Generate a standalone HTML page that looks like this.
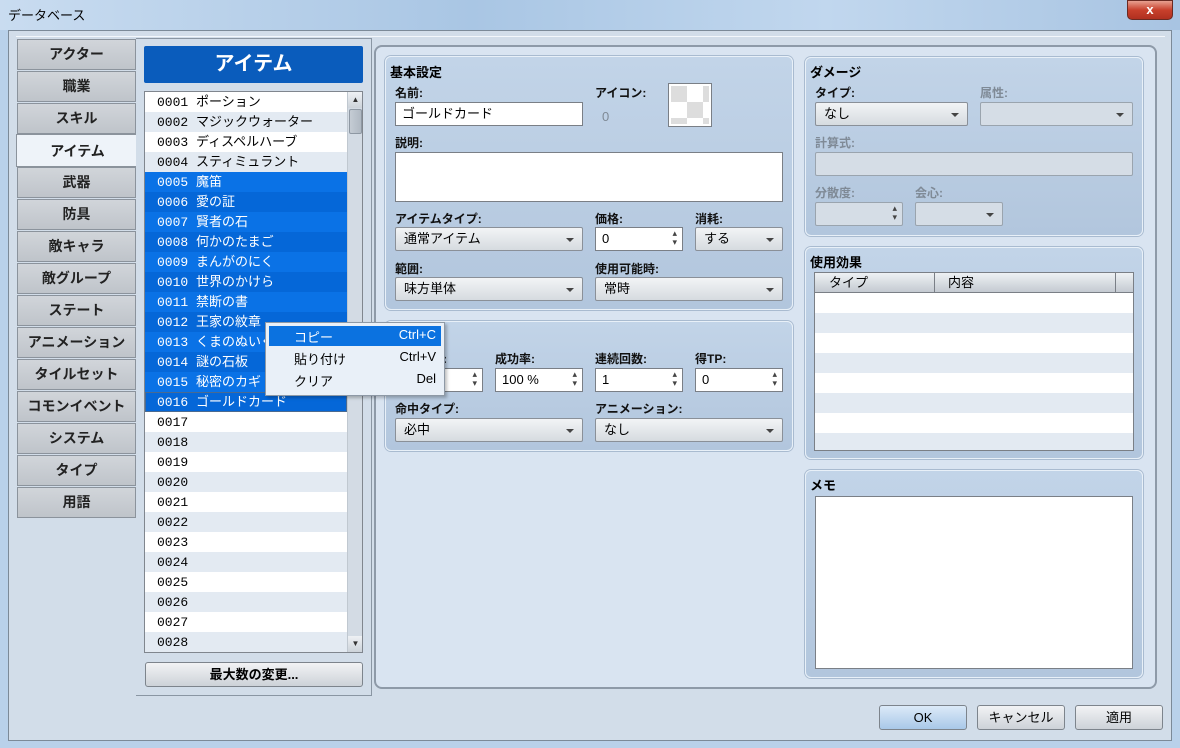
<!DOCTYPE html>
<html><head><meta charset="utf-8"><style>
*{box-sizing:border-box;margin:0;padding:0}
body{width:1180px;height:748px;overflow:hidden;position:relative;background:#b9d1ea;font-family:"Liberation Sans","Noto Sans CJK JP",sans-serif;font-size:13px;color:#000}
.a{position:absolute}
.title{left:0;top:0;width:1180px;height:30px;background:linear-gradient(90deg,#c9dcf0,#a9c6e4 40%,#c1d7ee 70%,#a8c4e2);}
.client{left:8px;top:30px;width:1164px;height:711px;background:#d2dde9;border:1px solid #7c8a98}
.tab{left:17px;width:119px;height:31px;background:linear-gradient(#d1d5da,#bfc4ca);border:1px solid #8b939c;font-weight:bold;font-size:14px;text-align:center;line-height:29px;color:#222}
.tab.sel{background:#eef3f9;left:16px;width:122px;border-right:none}
.lst{left:144px;top:91px;width:219px;height:562px;border:1px solid #80868e;background:#fff;overflow:hidden}
.r{position:absolute;left:0;width:202px;height:20px;line-height:21px;padding-left:12px;font-family:"Liberation Mono","Noto Sans CJK JP",monospace;font-size:13px;white-space:nowrap}
.r:nth-child(even){background:#e3eaf2}
.r.s{background:#0a72e6;color:#fff}
.r.s:nth-child(even){background:#0567d8}
.grp{background:linear-gradient(#c2d4e8,#b2c6dd);border:1px solid #e8f0f8;border-radius:6px;box-shadow:0 0 0 1px #a9bbd0}
.h{font-weight:bold;font-size:13px}
.lb{font-weight:bold;font-size:12px;color:#111}
.dis{color:#7f8a96}
.inp{background:#fff;border:1px solid #7a7f86;height:24px;line-height:22px;padding-left:6px;font-size:13px}
.sel2{background:linear-gradient(#f2f4f6,#d6dbe0);border:1px solid #8a9098;border-radius:2px;height:24px;line-height:22px;padding-left:8px;font-size:13px}
.sel2:after{content:"";position:absolute;right:8px;top:10px;border:4px solid transparent;border-top:4px solid #444;border-bottom:none}
.disb{background:#d5dde6;border:1px solid #9aa4ae;border-radius:2px;height:24px}
.spin:after{content:"▴\A▾";white-space:pre;position:absolute;right:5px;top:1px;font-size:9px;line-height:9px;color:#444}
.btn{background:linear-gradient(#f2f3f5,#cdd2d8);border:1px solid #7d848c;border-radius:3px;height:25px;line-height:23px;text-align:center;font-size:13px;font-weight:bold}
</style></head><body>
<div class="a title"></div>
<div class="a" style="left:8px;top:5px;font-size:13px">データベース</div>
<div class="a" style="left:1127px;top:0;width:46px;height:20px;background:linear-gradient(#e8a090,#c8402c 50%,#b03020);border:1px solid #6a2a22;border-radius:0 0 5px 5px;color:#fff;text-align:center;font-weight:bold;line-height:18px;font-size:13px">x</div>
<div class="a client"></div>
<div class="a" style="left:16px;top:36px;width:1149px;height:1px;background:#f3f7fb"></div>

<div class="a tab" style="top:39px">アクター</div>
<div class="a tab" style="top:71px">職業</div>
<div class="a tab" style="top:103px">スキル</div>
<div class="a tab sel" style="top:134px;height:33px;line-height:32px">アイテム</div>
<div class="a tab" style="top:167px">武器</div>
<div class="a tab" style="top:199px">防具</div>
<div class="a tab" style="top:231px">敵キャラ</div>
<div class="a tab" style="top:263px">敵グループ</div>
<div class="a tab" style="top:295px">ステート</div>
<div class="a tab" style="top:327px">アニメーション</div>
<div class="a tab" style="top:359px">タイルセット</div>
<div class="a tab" style="top:391px">コモンイベント</div>
<div class="a tab" style="top:423px">システム</div>
<div class="a tab" style="top:455px">タイプ</div>
<div class="a tab" style="top:487px">用語</div>

<div class="a" style="left:136px;top:38px;width:236px;height:658px;border:1px solid #8a96a3;border-left:none;background:#d2dde9"></div>
<div class="a" style="left:144px;top:46px;width:219px;height:37px;background:#0a5cbc;border-radius:2px;color:#fff;font-weight:bold;font-size:20px;text-align:center;line-height:37px">アイテム</div>
<div class="a lst">
<div class="r" style="top:0">0001 ポーション</div>
<div class="r" style="top:20px">0002 マジックウォーター</div>
<div class="r" style="top:40px">0003 ディスペルハーブ</div>
<div class="r" style="top:60px">0004 スティミュラント</div>
<div class="r s" style="top:80px">0005 魔笛</div>
<div class="r s" style="top:100px">0006 愛の証</div>
<div class="r s" style="top:120px">0007 賢者の石</div>
<div class="r s" style="top:140px">0008 何かのたまご</div>
<div class="r s" style="top:160px">0009 まんがのにく</div>
<div class="r s" style="top:180px">0010 世界のかけら</div>
<div class="r s" style="top:200px">0011 禁断の書</div>
<div class="r s" style="top:220px">0012 王家の紋章</div>
<div class="r s" style="top:240px">0013 くまのぬいぐるみ</div>
<div class="r s" style="top:260px">0014 謎の石板</div>
<div class="r s" style="top:280px">0015 秘密のカギ</div>
<div class="r s" style="top:300px;outline:1px solid #4a6a90;outline-offset:-1px">0016 ゴールドカード</div>
<div class="r" style="top:320px">0017</div>
<div class="r" style="top:340px">0018</div>
<div class="r" style="top:360px">0019</div>
<div class="r" style="top:380px">0020</div>
<div class="r" style="top:400px">0021</div>
<div class="r" style="top:420px">0022</div>
<div class="r" style="top:440px">0023</div>
<div class="r" style="top:460px">0024</div>
<div class="r" style="top:480px">0025</div>
<div class="r" style="top:500px">0026</div>
<div class="r" style="top:520px">0027</div>
<div class="r" style="top:540px">0028</div>
<div class="a" style="left:202px;top:0;width:16px;height:560px;background:#d3dbe4;border-left:1px solid #c0c8d0"></div>
<div class="a" style="left:203px;top:0;width:15px;height:16px;background:linear-gradient(#eef1f4,#cdd3da);font-size:8px;text-align:center;line-height:16px;color:#333">▲</div>
<div class="a" style="left:204px;top:17px;width:13px;height:25px;background:linear-gradient(90deg,#c5ccd4,#b0b9c3);border:1px solid #8e98a3;border-radius:2px"></div>
<div class="a" style="left:203px;top:544px;width:15px;height:16px;background:linear-gradient(#eef1f4,#cdd3da);font-size:8px;text-align:center;line-height:16px;color:#333">▼</div>
</div>
<div class="a btn" style="left:145px;top:662px;width:218px">最大数の変更...</div>

<div class="a" style="left:374px;top:45px;width:783px;height:644px;border:2px solid #8e9aa8;border-radius:8px;background:#d9e4f1"></div>

<div class="a grp" style="left:385px;top:56px;width:408px;height:254px"></div>
<div class="a h" style="left:390px;top:62px">基本設定</div>
<div class="a lb" style="left:395px;top:84px">名前:</div>
<div class="a inp" style="left:395px;top:102px;width:188px">ゴールドカード</div>
<div class="a lb" style="left:595px;top:84px">アイコン:</div>
<div class="a dis" style="left:602px;top:109px">0</div>
<div class="a" style="left:668px;top:83px;width:44px;height:44px;background:#fff;border:1px solid #7a7f86">
<div class="a" style="left:2px;top:2px;width:16px;height:16px;background:#ddd"></div><div class="a" style="left:34px;top:2px;width:6px;height:16px;background:#ddd"></div><div class="a" style="left:18px;top:18px;width:16px;height:16px;background:#ddd"></div><div class="a" style="left:2px;top:34px;width:16px;height:6px;background:#ddd"></div><div class="a" style="left:34px;top:34px;width:6px;height:6px;background:#ddd"></div></div>
<div class="a lb" style="left:395px;top:134px">説明:</div>
<div class="a inp" style="left:395px;top:152px;width:388px;height:50px"></div>
<div class="a lb" style="left:395px;top:210px">アイテムタイプ:</div>
<div class="a sel2" style="left:395px;top:227px;width:188px">通常アイテム</div>
<div class="a lb" style="left:595px;top:210px">価格:</div>
<div class="a inp spin" style="left:595px;top:227px;width:88px">0</div>
<div class="a lb" style="left:695px;top:210px">消耗:</div>
<div class="a sel2" style="left:695px;top:227px;width:88px">する</div>
<div class="a lb" style="left:395px;top:260px">範囲:</div>
<div class="a sel2" style="left:395px;top:277px;width:188px">味方単体</div>
<div class="a lb" style="left:595px;top:260px">使用可能時:</div>
<div class="a sel2" style="left:595px;top:277px;width:188px">常時</div>

<div class="a grp" style="left:385px;top:321px;width:408px;height:130px"></div>
<div class="a h" style="left:390px;top:327px">発動</div>
<div class="a lb" style="left:395px;top:350px">速度補正:</div>
<div class="a inp spin" style="left:395px;top:368px;width:88px">0</div>
<div class="a lb" style="left:495px;top:350px">成功率:</div>
<div class="a inp spin" style="left:495px;top:368px;width:88px">100 %</div>
<div class="a lb" style="left:595px;top:350px">連続回数:</div>
<div class="a inp spin" style="left:595px;top:368px;width:88px">1</div>
<div class="a lb" style="left:695px;top:350px">得TP:</div>
<div class="a inp spin" style="left:695px;top:368px;width:88px">0</div>
<div class="a lb" style="left:395px;top:400px">命中タイプ:</div>
<div class="a sel2" style="left:395px;top:418px;width:188px">必中</div>
<div class="a lb" style="left:595px;top:400px">アニメーション:</div>
<div class="a sel2" style="left:595px;top:418px;width:188px">なし</div>

<div class="a grp" style="left:805px;top:57px;width:338px;height:179px"></div>
<div class="a h" style="left:810px;top:62px">ダメージ</div>
<div class="a lb" style="left:815px;top:84px">タイプ:</div>
<div class="a sel2" style="left:815px;top:102px;width:153px">なし</div>
<div class="a lb dis" style="left:980px;top:84px">属性:</div>
<div class="a disb sel2" style="left:980px;top:102px;width:153px;background:#d5dde6;border-color:#9aa4ae"></div>
<div class="a lb dis" style="left:815px;top:134px">計算式:</div>
<div class="a disb" style="left:815px;top:152px;width:318px"></div>
<div class="a lb dis" style="left:815px;top:184px">分散度:</div>
<div class="a disb spin" style="left:815px;top:202px;width:88px"></div>
<div class="a lb dis" style="left:915px;top:184px">会心:</div>
<div class="a disb sel2" style="left:915px;top:202px;width:88px;background:#d5dde6;border-color:#9aa4ae"></div>

<div class="a grp" style="left:805px;top:247px;width:338px;height:212px"></div>
<div class="a h" style="left:810px;top:252px">使用効果</div>
<div class="a" style="left:814px;top:272px;width:320px;height:179px;border:1px solid #7a7f86;background:repeating-linear-gradient(#fff 0,#fff 20px,#e3eaf2 20px,#e3eaf2 40px);background-position:0 20px">
<div class="a" style="left:0;top:0;width:318px;height:20px;background:linear-gradient(#eef1f4,#c4cad1);border-bottom:1px solid #7a7f86;font-size:13px;line-height:19px">
<span class="a" style="left:14px">タイプ</span><span class="a" style="left:119px;top:0;height:19px;border-left:1px solid #7a7f86;padding-left:13px">内容</span><span class="a" style="left:300px;top:0;height:19px;border-left:1px solid #7a7f86"></span></div></div>

<div class="a grp" style="left:805px;top:470px;width:338px;height:208px"></div>
<div class="a h" style="left:810px;top:475px">メモ</div>
<div class="a inp" style="left:815px;top:496px;width:318px;height:173px"></div>

<div class="a btn" style="left:879px;top:705px;width:88px;background:linear-gradient(#dceaf8,#a9c8e8);font-weight:normal">OK</div>
<div class="a btn" style="left:977px;top:705px;width:88px;font-weight:normal">キャンセル</div>
<div class="a btn" style="left:1075px;top:705px;width:88px;font-weight:normal">適用</div>

<div class="a" style="left:265px;top:322px;width:180px;height:74px;background:#e9f0f8;border:1px solid #8e99a6;box-shadow:2px 2px 3px rgba(0,0,0,.25)">
<div class="a" style="left:3px;top:3px;width:172px;height:20px;background:#0b72e0"></div>
<div class="a" style="left:28px;top:4px;color:#fff">コピー</div><div class="a" style="right:8px;top:4px;color:#fff">Ctrl+C</div>
<div class="a" style="left:28px;top:26px">貼り付け</div><div class="a" style="right:8px;top:26px">Ctrl+V</div>
<div class="a" style="left:28px;top:48px">クリア</div><div class="a" style="right:8px;top:48px">Del</div>
</div>
</body></html>
